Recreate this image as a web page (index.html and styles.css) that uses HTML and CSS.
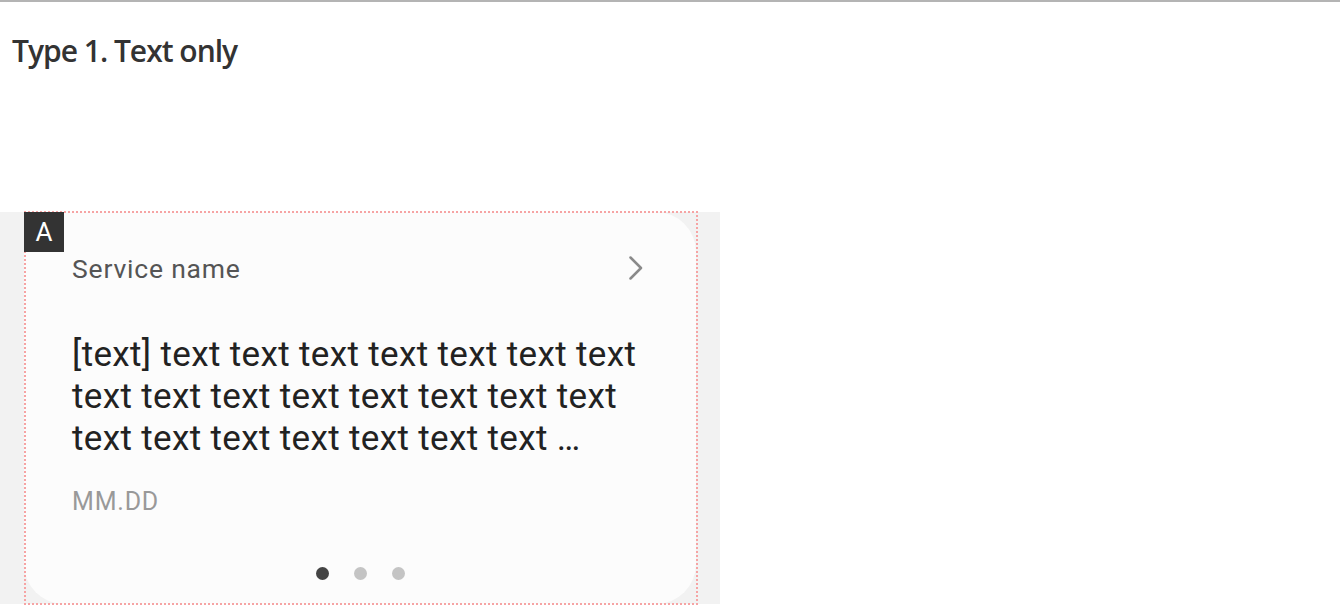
FILE: index.html
```html
<!DOCTYPE html>
<html lang="en">
<head>
<meta charset="utf-8">
<title>Type 1. Text only</title>
<link rel="stylesheet" href="styles.css">
</head>
<body>
<div class="page">
  <h2 class="section-title">Type 1. Text only</h2>
  <div class="stage">
    <div class="card">
      <span class="badge">A</span>
      <div class="card-head">
        <span class="service">Service name</span>
        <svg class="chevron" width="16" height="24" viewBox="0 0 16 24" aria-hidden="true">
          <path d="M2.5 1.5 L13 12 L2.5 22.5" fill="none" stroke="#8a8a8a" stroke-width="2.5" stroke-linecap="round" stroke-linejoin="round"/>
        </svg>
      </div>
      <p class="card-body">[text] text text text text text text text text text text text text text text text text text text text text text text …</p>
      <div class="card-date">MM.DD</div>
      <div class="dots">
        <span class="dot active"></span>
        <span class="dot"></span>
        <span class="dot"></span>
      </div>
    </div>
  </div>
</div>
</body>
</html>
```

FILE: styles.css
```css
* { box-sizing: border-box; }
html, body { margin: 0; padding: 0; background: #fff; }
body { font-family: Roboto, "Noto Sans", sans-serif; }
.page {
  border-top: 2px solid #b4b4b4;
  width: 1340px;
  height: 606px;
  overflow: hidden;
}
.section-title {
  margin: 0;
  padding: 29px 0 0 12px;
  font-family: "Open Sans", "Noto Sans", sans-serif;
  font-weight: 600;
  font-size: 30px;
  line-height: 40px;
  color: #333;
  letter-spacing: -1px;
}
.stage {
  margin-top: 141px;
  width: 720px;
  height: 392px;
  background: #f2f2f2;
  padding-left: 24px;
}
.card {
  position: relative;
  width: 672px;
  height: 392px;
  background: #fcfcfc;
  border-radius: 0 40px 40px 40px;
  padding: 43px 52px 0 48px;
  display: flex;
  flex-direction: column;
}
.card::after {
  content: "";
  position: absolute;
  top: -1px;
  left: 0;
  right: -2px;
  bottom: -1px;
  pointer-events: none;
  background:
    repeating-linear-gradient(90deg, #f6a4a4 0 2px, transparent 2px 4px) top left / 100% 2px no-repeat,
    repeating-linear-gradient(90deg, #f6a4a4 0 2px, transparent 2px 4px) bottom left / 100% 2px no-repeat,
    repeating-linear-gradient(180deg, #f6a4a4 0 2px, transparent 2px 4px) top left / 2px 100% no-repeat,
    repeating-linear-gradient(180deg, #f6a4a4 0 2px, transparent 2px 4px) top right / 2px 100% no-repeat;
}
.badge {
  position: absolute;
  left: 0;
  top: 0;
  width: 40px;
  height: 40px;
  background: #333;
  color: #fff;
  font-size: 26px;
  line-height: 40px;
  text-align: center;
  z-index: 1;
}
.card-head {
  display: flex;
  align-items: center;
  justify-content: space-between;
  height: 28px;
}
.service {
  font-size: 26.5px;
  letter-spacing: 0.8px;
  color: #555;
  line-height: 28px;
}
.chevron { display: block; margin-top: -2px; }
.card-body {
  margin: 51px 0 0;
  font-size: 35px;
  letter-spacing: 0.35px;
  line-height: 42px;
  color: #222;
}
.card-date {
  margin-top: 28px;
  font-size: 25px;
  letter-spacing: 0.8px;
  line-height: 28px;
  color: #999;
}
.dots {
  margin-top: auto;
  margin-bottom: 24px;
  display: flex;
  justify-content: center;
  gap: 25px;
  padding-left: 4px;
}
.dot {
  width: 13px;
  height: 13px;
  border-radius: 50%;
  background: #c4c4c4;
}
.dot.active { background: #444; }
```
